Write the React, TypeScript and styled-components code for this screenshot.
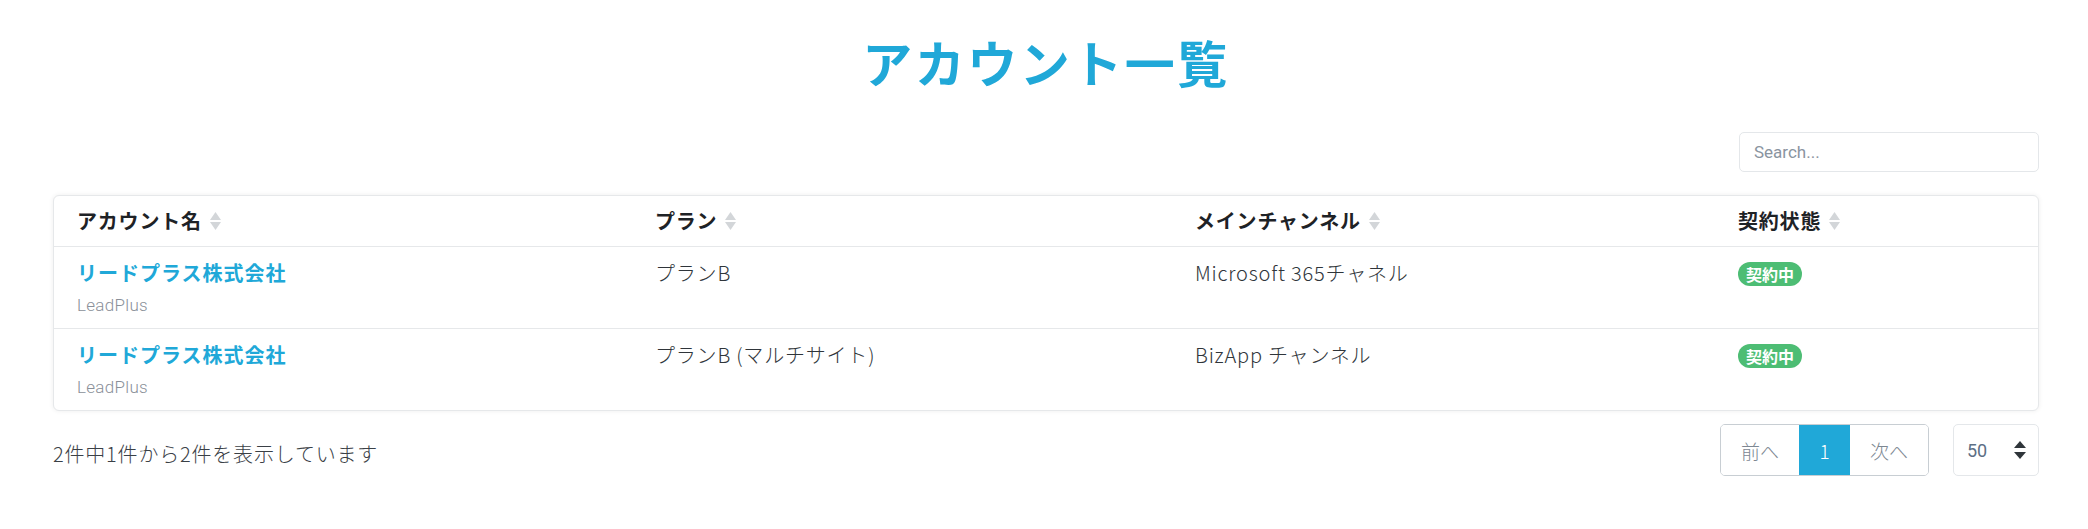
import React from "react";
import styled, { createGlobalStyle } from "styled-components";

const GlobalStyle = createGlobalStyle`
  html, body { margin: 0; padding: 0; background: #fff; }
  body {
    font-family: "Noto Sans CJK JP", "Noto Sans", sans-serif;
    color: #23282c;
  }
  * { box-sizing: border-box; }
`;

const Page = styled.div`
  padding: 0 49px 40px 53px;
`;

const Title = styled.h1`
  margin: 31px 0 0;
  height: 60px;
  line-height: 60px;
  text-align: center;
  font-size: 50px;
  font-weight: 700;
  color: #20a8d8;
  letter-spacing: 2.5px;
`;

const SearchRow = styled.div`
  display: flex;
  justify-content: flex-end;
  margin-top: 41px;
`;

const SearchInput = styled.input`
  width: 300px;
  height: 40px;
  border: 1px solid #e4e7ea;
  border-radius: 5px;
  padding: 0 14px;
  font-family: "Roboto", "Noto Sans", sans-serif;
  font-size: 17px;
  color: #5c6873;
  outline: none;
  &::placeholder { color: #8a949f; }
`;

const Card = styled.div`
  margin-top: 23px;
  border: 1px solid #e6e8ea;
  border-radius: 6px;
  background: #fff;
  box-shadow: 0 0 5px rgba(0, 0, 0, 0.07);
  overflow: hidden;
`;

const Row = styled.div<{ $head?: boolean; $last?: boolean }>`
  display: grid;
  grid-template-columns: 578px 540px 543px 1fr;
  border-bottom: ${(p) => (p.$last ? "none" : "1px solid #e6e8ea")};
  min-height: ${(p) => (p.$head ? "51px" : "81px")};
`;

const HeadCell = styled.div`
  display: flex;
  align-items: center;
  padding: 0 23px;
  font-size: 20px;
  font-weight: 700;
  color: #1e2226;
  line-height: 28px;
  letter-spacing: 0.8px;
`;

const Cell = styled.div`
  padding: 12px 23px 11px;
  font-size: 20px;
  font-weight: 300;
  line-height: 28px;
  color: #2f353a;
  letter-spacing: 0.8px;
`;

const CompanyName = styled.a`
  display: block;
  font-size: 20px;
  font-weight: 700;
  color: #20a8d8;
  line-height: 28px;
  letter-spacing: 1px;
  text-decoration: none;
`;

const SubName = styled.div`
  margin-top: 6px;
  font-family: "Roboto", "Noto Sans", sans-serif;
  font-size: 17px;
  line-height: 24px;
  letter-spacing: 0.3px;
  color: #8a9099;
`;

const Badge = styled.span`
  display: inline-flex;
  align-items: center;
  justify-content: center;
  margin-top: 2px;
  height: 24px;
  padding: 0 8px;
  border-radius: 12px;
  background: #4dbd74;
  color: #fff;
  font-size: 16px;
  font-weight: 700;
  line-height: 24px;
  letter-spacing: 0;
`;

const SortIcon = styled.svg`
  margin-left: 8px;
  flex: none;
`;

const Footer = styled.div`
  margin-top: 13px;
  display: flex;
  justify-content: space-between;
  align-items: center;
`;

const Info = styled.div`
  font-size: 20px;
  font-weight: 300;
  letter-spacing: 0.8px;
  color: #3a4046;
  padding-top: 6px;
`;

const Controls = styled.div`
  display: flex;
  gap: 24px;
  align-items: center;
`;

const Pager = styled.div`
  display: flex;
  height: 52px;
  border: 1px solid #c8ced3;
  border-radius: 5px;
  overflow: hidden;
`;

const PageBtn = styled.button<{ $active?: boolean }>`
  border: none;
  margin: 0;
  padding: 0 19px;
  min-width: ${(p) => (p.$active ? "51px" : "78px")};
  background: ${(p) => (p.$active ? "#20a8d8" : "#fff")};
  color: ${(p) => (p.$active ? "#fff" : "#7d8792")};
  font-family: "Noto Sans CJK JP", "Roboto", sans-serif;
  font-size: 19px;
  font-weight: 300;
  cursor: pointer;
`;

const SelectBox = styled.div`
  width: 86px;
  height: 52px;
  border: 1px solid #e4e7ea;
  border-radius: 5px;
  display: flex;
  align-items: center;
  padding: 0 12px 0 13px;
  justify-content: space-between;
  font-family: "Roboto", "Noto Sans", sans-serif;
  font-size: 18px;
  color: #5c6f85;
`;

const Sort = () => (
  <SortIcon width="11" height="18" viewBox="0 0 11 18">
    <path d="M5.5 0 L11 8 L0 8 Z" fill="#d3d6d9" />
    <path d="M0 10 L11 10 L5.5 18 Z" fill="#d3d6d9" />
  </SortIcon>
);

const rows = [
  { name: "リードプラス株式会社", sub: "LeadPlus", plan: "プランB", channel: "Microsoft 365チャネル", status: "契約中" },
  { name: "リードプラス株式会社", sub: "LeadPlus", plan: "プランB (マルチサイト)", channel: "BizApp チャンネル", status: "契約中" },
];

export default function App() {
  return (
    <>
      <GlobalStyle />
      <Page>
        <Title>アカウント一覧</Title>
        <SearchRow>
          <SearchInput placeholder="Search..." />
        </SearchRow>
        <Card>
          <Row $head>
            <HeadCell>アカウント名<Sort /></HeadCell>
            <HeadCell>プラン<Sort /></HeadCell>
            <HeadCell>メインチャンネル<Sort /></HeadCell>
            <HeadCell>契約状態<Sort /></HeadCell>
          </Row>
          {rows.map((r, i) => (
            <Row key={i} $last={i === rows.length - 1}>
              <Cell>
                <CompanyName href="#">{r.name}</CompanyName>
                <SubName>{r.sub}</SubName>
              </Cell>
              <Cell>{r.plan}</Cell>
              <Cell>{r.channel}</Cell>
              <Cell>
                <Badge>{r.status}</Badge>
              </Cell>
            </Row>
          ))}
        </Card>
        <Footer>
          <Info>2件中1件から2件を表示しています</Info>
          <Controls>
            <Pager>
              <PageBtn>前へ</PageBtn>
              <PageBtn $active>1</PageBtn>
              <PageBtn>次へ</PageBtn>
            </Pager>
            <SelectBox>
              <span>50</span>
              <svg width="12" height="18" viewBox="0 0 12 18">
                <path d="M6 0 L12 7 L0 7 Z" fill="#2f353a" />
                <path d="M0 11 L12 11 L6 18 Z" fill="#2f353a" />
              </svg>
            </SelectBox>
          </Controls>
        </Footer>
      </Page>
    </>
  );
}
